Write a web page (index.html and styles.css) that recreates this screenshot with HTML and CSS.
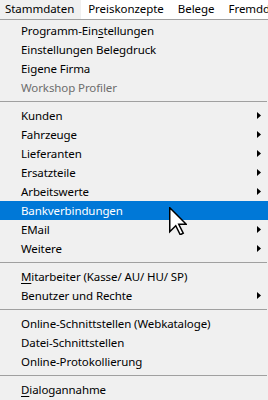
FILE: index.html
```html
<!DOCTYPE html>
<html lang="de">
<head>
<meta charset="utf-8">
<title>Menü</title>
<link rel="stylesheet" href="styles.css">
</head>
<body>
<div class="screen">
  <nav class="menubar">
    <span class="mb-item active">Stammdaten</span>
    <span class="mb-item">Preiskonzepte</span>
    <span class="mb-item">Belege</span>
    <span class="mb-item">Fremddaten</span>
  </nav>
  <ul class="popup">
    <li class="item">Programm-Ein<u>s</u>tellungen</li>
    <li class="item">Einstellungen Belegdruck</li>
    <li class="item">Eigene Firma</li>
    <li class="item disabled">Workshop Profiler</li>
    <li class="sep"></li>
    <li class="item sub">Kunden<svg class="arrow" viewBox="0 0 4 7"><polygon points="0,0 4,3.5 0,7"/></svg></li>
    <li class="item sub">Fahrzeuge<svg class="arrow" viewBox="0 0 4 7"><polygon points="0,0 4,3.5 0,7"/></svg></li>
    <li class="item sub">Lieferanten<svg class="arrow" viewBox="0 0 4 7"><polygon points="0,0 4,3.5 0,7"/></svg></li>
    <li class="item sub">Ersatzteile<svg class="arrow" viewBox="0 0 4 7"><polygon points="0,0 4,3.5 0,7"/></svg></li>
    <li class="item sub">Arbeitswerte<svg class="arrow" viewBox="0 0 4 7"><polygon points="0,0 4,3.5 0,7"/></svg></li>
    <li class="item hover">Bankverbindungen</li>
    <li class="item sub">EMail<svg class="arrow" viewBox="0 0 4 7"><polygon points="0,0 4,3.5 0,7"/></svg></li>
    <li class="item sub">Weitere<svg class="arrow" viewBox="0 0 4 7"><polygon points="0,0 4,3.5 0,7"/></svg></li>
    <li class="sep"></li>
    <li class="item"><u>M</u>itarbeiter (Kasse/ AU/ HU/ SP)</li>
    <li class="item sub">Benutzer und Rechte<svg class="arrow" viewBox="0 0 4 7"><polygon points="0,0 4,3.5 0,7"/></svg></li>
    <li class="sep"></li>
    <li class="item">Online-Schnittstellen (Webkataloge)</li>
    <li class="item">Datei-Schnittstellen</li>
    <li class="item">Online-Protokollierung</li>
    <li class="sep"></li>
    <li class="item"><u>D</u>ialogannahme</li>
  </ul>
  <svg class="cursor" viewBox="0 0 12 19" width="18" height="28.5">
    <path d="M0.5,0.5 L0.5,16.5 L4.5,12.5 L7.5,18.5 L9.5,17.5 L6.5,11.5 L11.5,11.5 Z" fill="#fff" stroke="#000" stroke-width="1" stroke-linejoin="miter"/>
  </svg>
</div>
</body>
</html>
```
FILE: styles.css
```css
html, body {
  margin: 0;
  padding: 0;
  background: #f0f0f0;
}
.screen {
  position: relative;
  width: 268px;
  height: 400px;
  overflow: hidden;
  font-family: "Noto Sans", "Open Sans", sans-serif;
  font-size: 11.5px;
  letter-spacing: -0.1px;
  color: #000;
}
.menubar {
  display: flex;
  height: 19px;
  background: #fff;
  white-space: nowrap;
  border-bottom: 1px solid #a0a0a0;
  overflow: hidden;
}
.mb-item {
  padding: 0 7px 0 4px;
  margin-right: 3px;
  line-height: 18px;
  letter-spacing: -0.05px;
}
.mb-item.active {
  background: #f0f0f0;
  padding-left: 5px;
}
.popup {
  list-style: none;
  margin: 0;
  padding: 1px 0 0;
  background: #f0f0f0;
}
.item {
  position: relative;
  height: 19px;
  line-height: 19px;
  padding-left: 21px;
  white-space: nowrap;
}
.item u {
  text-decoration-thickness: 1px;
  text-underline-offset: 2px;
}
.item.disabled {
  color: #6d6d6d;
}
.item.hover {
  background: #0078d7;
  color: #fff;
}
.arrow {
  position: absolute;
  left: 257px;
  top: 6px;
  width: 4px;
  height: 7px;
  fill: #000;
}
.sep {
  height: 9px;
  display: flex;
  align-items: center;
}
.sep::before {
  content: "";
  display: block;
  width: 267px;
  height: 1px;
  background: #a0a0a0;
}
.cursor {
  position: absolute;
  left: 168.5px;
  top: 206.5px;
}
```
